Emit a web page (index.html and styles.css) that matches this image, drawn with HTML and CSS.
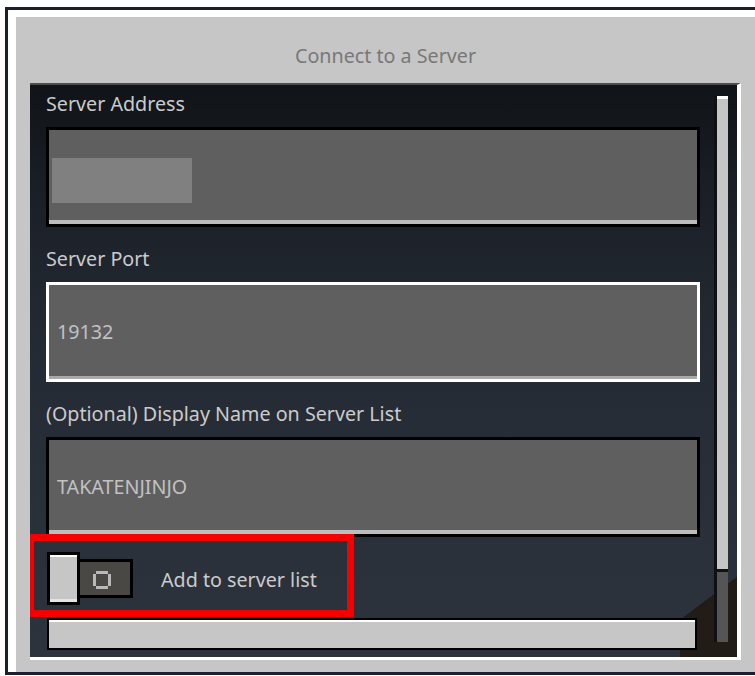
FILE: index.html
```html
<!DOCTYPE html>
<html lang="en">
<head>
<meta charset="utf-8">
<title>Connect to a Server</title>
<link rel="stylesheet" href="styles.css">
</head>
<body>
<div class="window">
  <div class="frame">
    <h1 class="title">Connect to a Server</h1>
    <div class="panel">
      <div class="form">
        <label class="field-label">Server Address</label>
        <div class="input"><span class="redacted"></span></div>

        <label class="field-label">Server Port</label>
        <div class="input input--focus"><span class="value">19132</span></div>

        <label class="field-label">(Optional) Display Name on Server List</label>
        <div class="input"><span class="value">TAKATENJINJO</span></div>

        <div class="toggle-row">
          <div class="toggle">
            <span class="knob"></span>
            <span class="track">
              <svg class="off-icon" width="18" height="18" viewBox="0 0 18 18" aria-hidden="true">
                <rect x="3" y="0" width="12" height="3" fill="#b9b9b9"/>
                <rect x="3" y="15" width="12" height="3" fill="#b9b9b9"/>
                <rect x="0" y="3" width="3" height="12" fill="#b9b9b9"/>
                <rect x="15" y="3" width="3" height="12" fill="#b9b9b9"/>
              </svg>
            </span>
          </div>
          <span class="toggle-label">Add to server list</span>
          <span class="highlight"></span>
        </div>

        <div class="button"></div>
      </div>
      <div class="scrollbar"><div class="thumb"></div></div>
    </div>
  </div>
</div>
</body>
</html>
```
FILE: styles.css
```css
html, body {
  margin: 0;
  overflow: hidden;
  background: #fff;
}

body {
  font-family: "Noto Sans", "Open Sans", sans-serif;
}

/* outer dialog chrome */
.window {
  margin: 7px 0 0 5px;
  width: 755px;
  border: 3px solid #1b1f30;
}

.frame {
  border-top: 7px solid #fff;
  border-left: 8px solid #fff;
  border-right: 8px solid #fff;
  background: #c6c6c6;
  padding: 0 14px 12px;
}

.title {
  margin: 0;
  height: 66px;
  box-sizing: border-box;
  padding-top: 26px;
  font-size: 19.7px;
  line-height: 26px;
  font-weight: 400;
  color: #787878;
  text-align: center;
}

/* dark scrolling pane */
.panel {
  display: flex;
  height: 577px;
  box-sizing: border-box;
  border-top: 2px solid #4d4d4d;
  border-right: 4px solid #fff;
  border-bottom: 3px solid #fff;
  background:
    linear-gradient(to top left, #221c17 50%, transparent 50.5%) right 0 bottom 37px / 57px 43px no-repeat,
    linear-gradient(#221c17, #221c17) right bottom / 57px 37px no-repeat,
    linear-gradient(180deg, #101317 0%, #1b2028 20%, #242a33 45%, #2a3039 75%, #2c333d 100%);
}

.form {
  flex: 1;
  min-width: 0;
  padding: 6px 14px 0 16px;
  overflow: hidden;
}

.field-label {
  display: block;
  margin-top: 19px;
  font-size: 19.7px;
  line-height: 26px;
  color: #cbcbcb;
}

.field-label:first-child {
  margin-top: 0;
}

.input {
  margin-top: 10px;
  height: 100px;
  box-sizing: border-box;
  border: 3px solid #000;
  background: #5f5f5f;
  box-shadow: inset 0 -4px 0 #bdbdbd;
  display: flex;
  align-items: center;
  padding: 0 8px;
  font-size: 19.7px;
  line-height: 26px;
  color: #c2c2c2;
}

.input--focus {
  border-color: #fff;
  box-shadow: inset 0 -3px 0 #a9a9a9;
}

.redacted {
  width: 140px;
  height: 45px;
  margin: 7px 0 0 -5px;
  background: #808080;
}

/* toggle switch */
.toggle-row {
  position: relative;
  display: flex;
  align-items: center;
  margin-top: 15px;
  height: 53px;
}

.toggle {
  display: flex;
  align-items: center;
  margin-left: 1px;
}

.knob {
  position: relative;
  z-index: 1;
  width: 33px;
  height: 53px;
  box-sizing: border-box;
  border: 3px solid #000;
  background: #c6c6c6;
  box-shadow: inset 0 2px 0 #fff, inset 0 -3px 0 #e4e4e4;
}

.track {
  width: 56px;
  height: 39px;
  box-sizing: border-box;
  margin-left: -3px;
  border: 3px solid #000;
  background: #4a4845;
  display: flex;
  align-items: center;
  justify-content: center;
  padding: 3px 6px 0 0;
}

.off-icon {
  display: block;
}

.toggle-label {
  margin-left: 28px;
  padding-top: 2px;
  font-size: 19.7px;
  line-height: 26px;
  color: #cbcbcb;
}

.highlight {
  position: absolute;
  left: -19px;
  top: -18px;
  width: 327px;
  height: 83px;
  box-sizing: border-box;
  border: 7px solid #f50000;
  pointer-events: none;
}

.button {
  margin: 13px 0 0 1px;
  width: 650px;
  height: 32px;
  box-sizing: border-box;
  border: 2px solid #000;
  background: #c6c6c6;
  box-shadow: inset 0 2px 0 #fff;
}

/* scrollbar */
.scrollbar {
  width: 11px;
  margin: 11px 9px 15px 0;
  border-left: 3px solid #0e1014;
  background: #555;
}

.thumb {
  height: 476px;
  box-sizing: border-box;
  background: #c6c6c6;
  border-top: 3px solid #fff;
  border-bottom: 3px solid #111;
}
```
